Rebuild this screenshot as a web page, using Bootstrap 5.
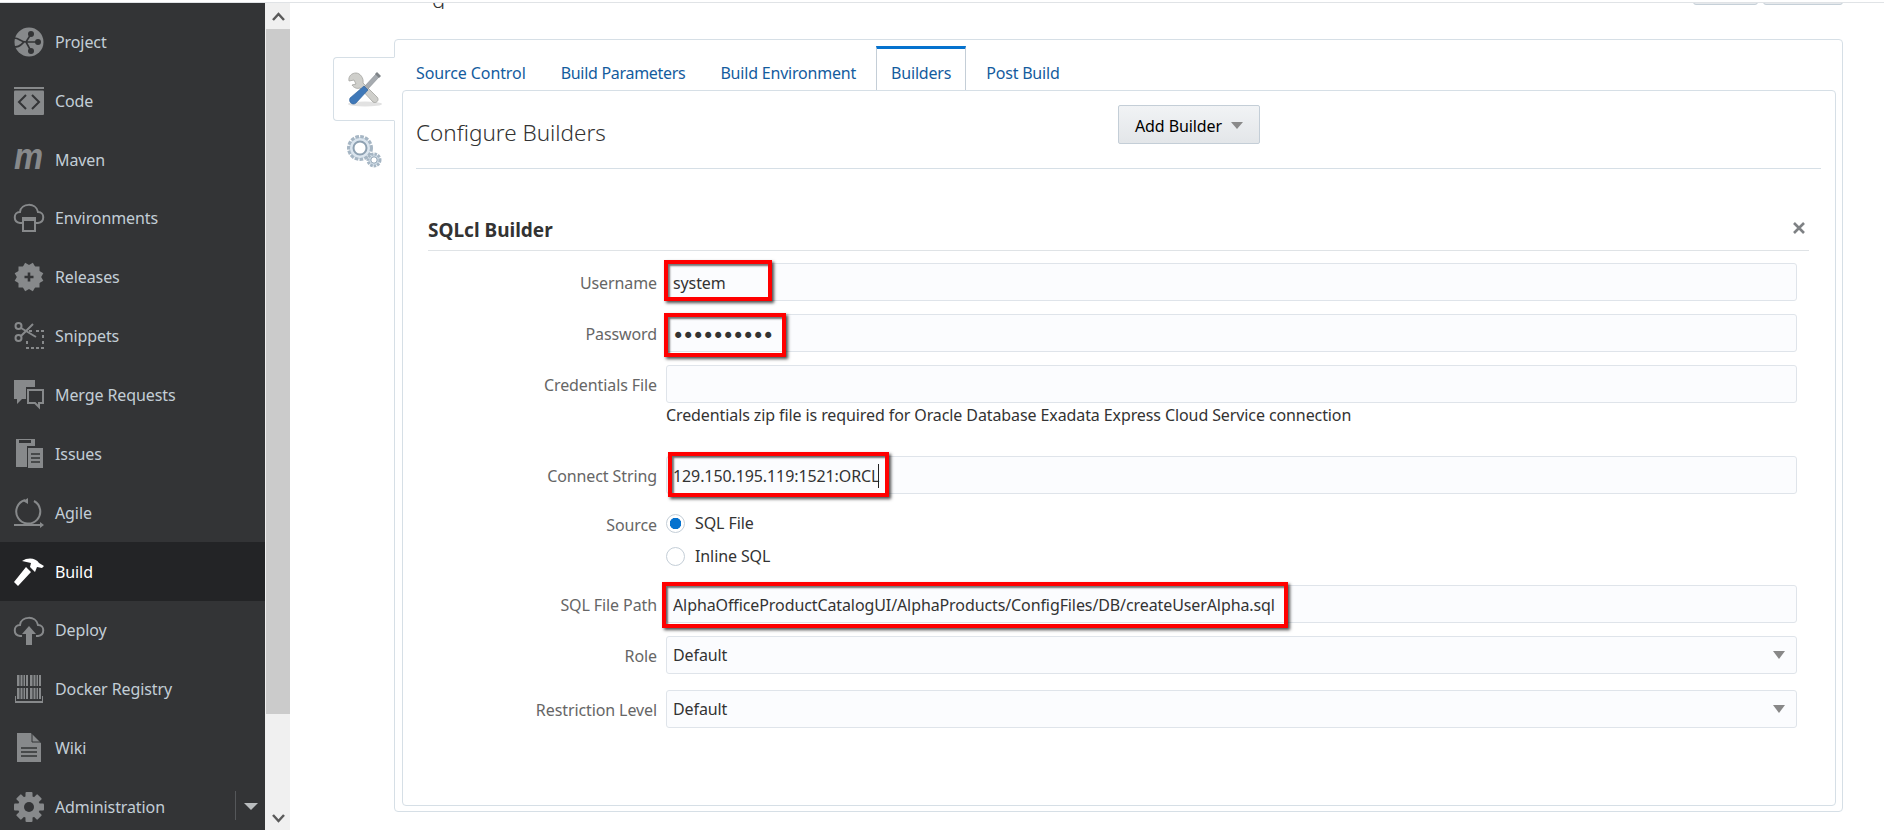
<!DOCTYPE html>
<html lang="en"><head><meta charset="utf-8"><title>Builders</title>
<link href="https://cdn.jsdelivr.net/npm/bootstrap@5.3.0/dist/css/bootstrap.min.css" rel="stylesheet">
<style>
html,body{height:830px;overflow:hidden}
body{font-family:"Noto Sans","Liberation Sans",sans-serif;font-size:16px;letter-spacing:-.1px;color:#333;background:#fff}
.topline{height:1px;background:#e0e3e6;margin-top:2px}
.frame{height:827px;overflow:hidden}
.sidebar{width:265px;flex:none;background:#333436;padding-top:9.5px;height:827px}
.sitem{height:58.85px;padding-left:14px;color:#c3ced6;gap:11px;font-size:16px;position:relative}
.sitem svg{width:30px;height:30px;flex:none;fill:#87898b;stroke:none;overflow:visible}
.sitem.on{background:#232426;color:#fff}
.sitem.on svg{fill:#fff}
.sline{stroke:#87898b;fill:none;stroke-width:2}
.adminsep{position:absolute;left:235px;top:14px;height:29px;border-left:1px solid #55575a}
.admincaret{position:absolute;left:244px;top:26px;border-top:7px solid #b9bcbe;border-left:7px solid transparent;border-right:7px solid transparent}
.sbar{width:25px;flex:none;background:#f0f0f0;height:827px;padding-left:1px}
.sarrow{height:26px}
.sarrow.dn{height:24px}
.sthumb{height:685px;background:#cbcbcb}
.sgap{height:92px}
.mainarea{flex:1 1 auto;min-width:0;padding-left:43px;padding-right:41px;position:relative}
.cliptitle{height:6px;overflow:hidden;position:relative}
.gtail{position:absolute;left:99px;top:-15px;font-size:22px;font-weight:300;line-height:22px;color:#333}
.cutbtn{position:absolute;top:-10px;height:12px;background:#e6e9ec;border:1px solid #c6d0d8;border-radius:3px}
.cutbtn.a{left:1360px;width:65px}.cutbtn.b{left:1430px;width:80px}
.worksp{margin-top:30px}
.sidetabs{width:61px;flex:none;padding-top:18px;position:relative;z-index:1}
.sidetab{height:64px;width:62px;border:1px solid #d6dfe6;border-right:1px solid #fff;border-radius:4px 0 0 4px;background:#fff}
.sidetab2{height:50px;width:61px;padding-top:12px}
.outer{width:1449px;height:773px;border:1px solid #d6dfe6;border-radius:4px;padding:6px 6px 6px 7px;background:#fff}
.tabrow{height:44px;border:0;flex-wrap:nowrap;gap:5px;margin-left:-1px}
.tabrow .nav-link{border:0;border-radius:0;padding:0 15px;height:44px;line-height:54px;color:#145c9e;font-size:16px;letter-spacing:-.2px;margin:0;background:none}
.tabrow .nav-link.active{height:44px;border-top:3px solid #0572ce;border-left:1px solid #c4ced7;border-right:1px solid #c4ced7;line-height:48px;padding:0 14px;color:#145c9e;background:#fff}
.tabrow .nav-link.tab-wide{letter-spacing:-.1px}
.tabrow .nav-link.tab-tight{letter-spacing:-.3px}
.inner{height:716px;border:1px solid #d6dfe6;border-radius:4px;padding:0 14px 0 13px}
.conf{height:78px;border-bottom:1px solid #d6dfe6}
.conf-title{width:702px;flex:none;font-size:22.5px;font-weight:300;margin:0;color:#333;line-height:1;padding-top:31px;letter-spacing:0}
.addbtn{width:142px;height:39px;margin-top:14px;background:linear-gradient(#f1f3f5,#e3e6e9);border:1px solid #c4ced7;border-radius:2px;color:#000;font-size:16px;padding:2px 0 0;display:flex;align-items:center;justify-content:center;gap:9px;letter-spacing:-.1px}
.addbtn::after{margin:0;border-top:7px solid #8a8a8a;border-left:6px solid transparent;border-right:6px solid transparent;border-bottom:0}
.bsec{margin:46px 12px 0 12px}
.bhead{height:36px;border-bottom:1px solid #dfe3e6}
.bhead h5{font-size:19px;font-weight:700;margin:2px 0 0;line-height:26px;color:#333;letter-spacing:0}
.xmark{width:14px;height:14px;margin:6px 3px 0 0;stroke:#7e8184;stroke-width:2.6;fill:none}
.bform{padding:12px 12px 0 0}
.frow{margin-bottom:13px;align-items:flex-start}
.flabel{width:238px;height:38px;flex:none;text-align:right;padding-right:9px;margin:0;color:#666;line-height:41px;font-size:16px}
.fbody{flex:1 1 auto;min-width:0;position:relative}
.finput,.fselect{height:38px;border:1px solid #dfe4ea;border-radius:3px;background-color:#fbfcfe;padding:2px 6px 0;font-size:16px;letter-spacing:-.1px;color:#333;box-shadow:none}
.fpass{font-family:"DejaVu Sans",sans-serif;font-size:21px;letter-spacing:-2.4px;color:#333;padding-top:6px;padding-left:5px}
.fselect{background-image:url("data:image/svg+xml,%3Csvg xmlns='http://www.w3.org/2000/svg' width='12' height='8'%3E%3Cpath d='M0 0h12L6 8z' fill='%23888'/%3E%3C/svg%3E");background-position:right 11px center;background-size:12px 8px;padding-top:0}
.fhelp{line-height:24px;color:#333;height:40px}
.redmark{position:absolute;border:4px solid #f00;box-shadow:2px 2px 3px rgba(0,0,0,.7),inset 2px 2px 2px rgba(0,0,0,.55);pointer-events:none}
.rm-user{left:-2px;top:-3px;width:108px;height:41px}
.rm-pass{left:-2px;top:-1px;width:122px;height:44px}
.rm-conn{left:2px;top:-4px;width:221px;height:45px}
.rm-sql{left:-4px;top:-3px;width:626px;height:46px}
.caretbar{position:absolute;left:206px;top:8px;height:24px;width:1px;background:#222}
.srcrow{height:65px}
.srclabel{line-height:36px}
.srcbody{padding-top:5px}
.rolerow{margin-bottom:16px}
.fcheck{min-height:0;padding:0;margin:0 0 11px;gap:10px;height:22px}
.fcheck .form-check-input{float:none;margin:0;width:19px;height:19px;border:1px solid #c4ced7;background-color:#fff}
.fcheck .form-check-input:checked{background:radial-gradient(circle,#0572ce 0 5.5px,#fff 6px);border-color:#c4ced7}
.fcheck .form-check-label{color:#333;line-height:22px}
</style></head>
<body>
<div class="topline"></div>
<div class="frame d-flex">
 <nav class="sidebar">
  <div class="sitem d-flex align-items-center"><svg viewBox="0 0 30 30"><circle cx="15" cy="15" r="14.5"/><g fill="#333436"><circle cx="17" cy="7" r="3"/><circle cx="24" cy="15" r="3"/><circle cx="17" cy="24" r="3"/></g><path d="M0 11c6 0 6 4 12 4h12M0 20c7 0 6-2 10-5M12 15l5-8M12 15l5 9" stroke="#333436" stroke-width="1.6" fill="none"/></svg><span>Project</span></div>
  <div class="sitem d-flex align-items-center"><svg viewBox="0 0 30 30"><rect y="1" width="30" height="2"/><rect y="4.5" width="30" height="24.5" rx="1"/><path d="M12 9l-7 7 7 7M18 9l7 7-7 7" stroke="#333436" stroke-width="2" fill="none"/></svg><span>Code</span></div>
  <div class="sitem d-flex align-items-center"><svg viewBox="0 0 30 30"><text x="0" y="24" font-family="Liberation Sans" font-size="36" font-weight="700" font-style="italic" textLength="29" lengthAdjust="spacingAndGlyphs">m</text></svg><span>Maven</span></div>
  <div class="sitem d-flex align-items-center"><svg viewBox="0 0 30 30"><path class="sline" d="M8 20H6C-1 19-1 9 6 9c1-9 16-10 18 0 7 0 7 10 0 11h-2"/><path class="sline" d="M9 15h12v13H9z" stroke-width="2.4"/><path d="M9 15h12v3H9z"/></svg><span>Environments</span></div>
  <div class="sitem d-flex align-items-center"><svg viewBox="0 0 30 30"><rect x="4.500" y="4.500" width="21" height="21"/><rect x="4.500" y="4.500" width="21" height="21" transform="rotate(30 15 15)"/><rect x="4.500" y="4.500" width="21" height="21" transform="rotate(60 15 15)"/><path d="M15 10.500v9M10.500 15h9" stroke="#333436" stroke-width="2.600"/></svg><span>Releases</span></div>
  <div class="sitem d-flex align-items-center"><svg viewBox="0 0 30 30"><g fill="none" stroke="#87898b" stroke-width="2"><circle cx="4.500" cy="5" r="3"/><circle cx="4.500" cy="17" r="3"/><path d="M7 7l15 9M7 15L19 3"/></g><path d="M15 9h3v2h-3zM22 9h3v2h-3zM27 9h3v2h-3zM28 14h2v3h-2zM28 20h2v3h-2zM12 26h3v2h-3zM17 26h3v2h-3zM22 26h3v2h-3zM27 26h3v2h-3zM12 20h2v3h-2z"/></svg><span>Snippets</span></div>
  <div class="sitem d-flex align-items-center"><svg viewBox="0 0 30 30"><path d="M0 0h21v7H12v12H8l-5 5v-5H0z"/><path class="sline" d="M14 10h15v13h-4v4l-4-4h-7z"/></svg><span>Merge Requests</span></div>
  <div class="sitem d-flex align-items-center"><svg viewBox="0 0 30 30"><path d="M2 0h19v7H13v21H2z"/><rect x="5" y="1" width="12" height="3" fill="#333436"/><path d="M14 9h15v20H14z"/><path d="M17 15h9M17 19h9M17 23h9" stroke="#333436" stroke-width="1.500"/></svg><span>Issues</span></div>
  <div class="sitem d-flex align-items-center"><svg viewBox="0 0 30 30"><path class="sline" d="M11 2a12 12 0 1 0 9 1M0 27h27"/><path d="M14 0l-5 3 5 3zM26 24l4 3-4 3z"/></svg><span>Agile</span></div>
  <div class="sitem on d-flex align-items-center"><svg viewBox="0 0 30 30"><path d="M0 25l4 4 13-14-5-5zM8 4c6-4 14-3 17 2l5 3-2 2-5-1-2 5-5-5 1-4c-3-1-6-1-9-2z"/></svg><span>Build</span></div>
  <div class="sitem d-flex align-items-center"><svg viewBox="0 0 30 30"><path class="sline" d="M8 21H6C-1 20-1 10 6 10c1-9 16-10 18 0 7 0 7 10 0 11h-2"/><path d="M15 11l7 8h-4v11h-6V19H8z"/></svg><span>Deploy</span></div>
  <div class="sitem d-flex align-items-center"><svg viewBox="0 0 30 30"><path d="M3 1h11v11H3zM16 1h11v11H16zM3 14h11v11H3zM16 14h11v11H16zM1 22h1v5h26v-5h1v7H1z"/><path d="M6 1v24M9 1v24M11.500 1v24M19 1v24M22 1v24M24.500 1v24" stroke="#333436"/></svg><span>Docker Registry</span></div>
  <div class="sitem d-flex align-items-center"><svg viewBox="0 0 30 30"><path d="M3 0h14l10 10v19H3z"/><path d="M18 0v9h9" fill="none" stroke="#333436"/><path d="M7 15h16M7 19h16M7 23h16" stroke="#333436" stroke-width="1.500"/></svg><span>Wiki</span></div>
  <div class="sitem d-flex align-items-center"><svg viewBox="0 0 30 30"><rect x="11.500" y="0" width="7" height="30" rx="1"/><rect x="11.500" y="0" width="7" height="30" rx="1" transform="rotate(45 15 15)"/><rect x="11.500" y="0" width="7" height="30" rx="1" transform="rotate(90 15 15)"/><rect x="11.500" y="0" width="7" height="30" rx="1" transform="rotate(135 15 15)"/><circle cx="15" cy="15" r="11"/><circle cx="15" cy="15" r="5" fill="#333436"/></svg><span>Administration</span><i class="adminsep"></i><i class="admincaret"></i></div>
 </nav>
 <div class="sbar">
  <div class="sarrow d-flex align-items-center justify-content-center"><svg width="13" height="9" viewBox="0 0 13 9"><path d="M1 8l5.500-6 5.500 6" fill="none" stroke="#5a5a5a" stroke-width="2.500"/></svg></div>
  <div class="sthumb"></div>
  <div class="sgap"></div>
  <div class="sarrow dn d-flex align-items-center justify-content-center"><svg width="13" height="9" viewBox="0 0 13 9"><path d="M1 1l5.500 6 5.500-6" fill="none" stroke="#5a5a5a" stroke-width="2.500"/></svg></div>
 </div>
 <main class="mainarea">
  <div class="cliptitle"><span class="gtail">g</span><i class="cutbtn a"></i><i class="cutbtn b"></i></div>
  <div class="worksp d-flex">
   <div class="sidetabs">
    <div class="sidetab d-flex align-items-center justify-content-center">
     <svg width="38" height="38" viewBox="0 0 38 38"><ellipse cx="20" cy="34" rx="17" ry="2.500" fill="#e2e2e2"/><path d="M11 3c-4 0-8 3-7 8l5-1 2 4-4 1c2 3 5 4 8 3l13 14c3 2 7-2 4-5L18 13c1-5-3-10-7-10z" fill="#cfcfcb" stroke="#a3a3a0" stroke-width=".8"/><path d="M31 4l3 3-12 13-3-3z" fill="#a6abb0" stroke="#888d92" stroke-width=".6"/><path d="M32 2l4 4-2 2-4-4z" fill="#7f8488"/><path d="M19 16l4 4-12 13c-3 3-8-1-6-5z" fill="#3f78b8" stroke="#2f5f98" stroke-width=".6"/></svg>
    </div>
    <div class="sidetab2 d-flex align-items-start justify-content-center">
     <svg width="40" height="36" viewBox="0 0 40 36"><g fill="#d4e0ea" stroke="#a6b6c4" stroke-dasharray="3.500 1.200" stroke-width="4"><circle cx="16" cy="15" r="11"/></g><circle cx="16" cy="15" r="10" fill="#dbe5ee"/><circle cx="16" cy="15" r="6.500" fill="#fff" stroke="#8ea1b2" stroke-width="2"/><g fill="#d4e0ea" stroke="#a6b6c4" stroke-dasharray="2.500 1" stroke-width="3"><circle cx="30" cy="27" r="6"/></g><circle cx="30" cy="27" r="3.200" fill="#fff" stroke="#8ea1b2"/></svg>
    </div>
   </div>
   <section class="outer">
    <ul class="nav nav-tabs tabrow">
     <li class="nav-item"><a class="nav-link tab-wide" href="#">Source Control</a></li>
     <li class="nav-item"><a class="nav-link tab-tight" href="#">Build Parameters</a></li>
     <li class="nav-item"><a class="nav-link" href="#">Build Environment</a></li>
     <li class="nav-item"><a class="nav-link active" href="#">Builders</a></li>
     <li class="nav-item"><a class="nav-link" href="#">Post Build</a></li>
    </ul>
    <div class="inner">
     <div class="conf d-flex align-items-start">
      <h4 class="conf-title">Configure Builders</h4>
      <button class="btn addbtn dropdown-toggle" type="button">Add Builder</button>
     </div>
     <div class="bsec">
      <div class="bhead d-flex justify-content-between align-items-start">
       <h5>SQLcl Builder</h5>
       <svg class="xmark" viewBox="0 0 14 14"><path d="M2 2l10 10M12 2L2 12"/></svg>
      </div>
      <form class="bform">
       <div class="d-flex frow"><label class="flabel">Username</label><div class="fbody"><input class="form-control finput" value="system"><div class="redmark rm-user"></div></div></div>
       <div class="d-flex frow"><label class="flabel">Password</label><div class="fbody"><input class="form-control finput fpass" type="password" value="secret1234"><div class="redmark rm-pass"></div></div></div>
       <div class="d-flex frow"><label class="flabel">Credentials File</label><div class="fbody"><input class="form-control finput"><div class="fhelp">Credentials zip file is required for Oracle Database Exadata Express Cloud Service connection</div></div></div>
       <div class="d-flex frow"><label class="flabel">Connect String</label><div class="fbody"><input class="form-control finput" value="129.150.195.119:1521:ORCL"><div class="redmark rm-conn"><i class="caretbar"></i></div></div></div>
       <div class="d-flex frow srcrow"><label class="flabel srclabel">Source</label><div class="fbody srcbody">
        <div class="form-check fcheck d-flex align-items-center"><input class="form-check-input" type="radio" name="src" id="r1" checked><label class="form-check-label" for="r1">SQL File</label></div>
        <div class="form-check fcheck d-flex align-items-center"><input class="form-check-input" type="radio" name="src" id="r2"><label class="form-check-label" for="r2">Inline SQL</label></div>
       </div></div>
       <div class="d-flex frow"><label class="flabel">SQL File Path</label><div class="fbody"><input class="form-control finput" value="AlphaOfficeProductCatalogUI/AlphaProducts/ConfigFiles/DB/createUserAlpha.sql"><div class="redmark rm-sql"></div></div></div>
       <div class="d-flex frow rolerow"><label class="flabel">Role</label><div class="fbody"><select class="form-select fselect"><option>Default</option></select></div></div>
       <div class="d-flex frow"><label class="flabel">Restriction Level</label><div class="fbody"><select class="form-select fselect"><option>Default</option></select></div></div>
      </form>
     </div>
    </div>
   </section>
  </div>
 </main>
</div>
</body></html>
